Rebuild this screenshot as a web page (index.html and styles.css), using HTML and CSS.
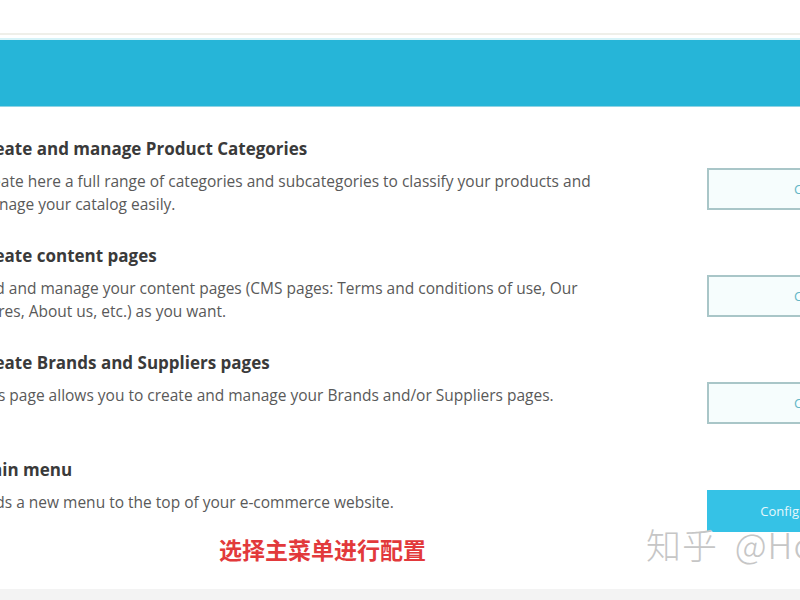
FILE: index.html
```html
<!DOCTYPE html>
<html lang="en">
<head>
    <meta charset="UTF-8">
    <meta name="viewport" content="width=device-width, initial-scale=1.0">
    <title>Store setup</title>
    <link rel="stylesheet" href="styles.css">
</head>
<body>
    <div class="topbar"></div>
    <div class="banner"></div>

    <div class="steps">
        <div class="step">
            <div class="step-text">
                <h3>Create and manage Product Categories</h3>
                <p>Create here a full range of categories and subcategories to classify your products and manage your catalog easily.</p>
            </div>
            <a class="btn btn-outline">Create</a>
        </div>

        <div class="step">
            <div class="step-text">
                <h3>Create content pages</h3>
                <p>Add and manage your content pages (CMS pages: Terms and conditions of use, Our stores, About us, etc.) as you want.</p>
            </div>
            <a class="btn btn-outline">Create</a>
        </div>

        <div class="step">
            <div class="step-text">
                <h3>Create Brands and Suppliers pages</h3>
                <p>This page allows you to create and manage your Brands and/or Suppliers pages.</p>
            </div>
            <a class="btn btn-outline">Create</a>
        </div>

        <div class="step">
            <div class="step-text">
                <h3>Main menu</h3>
                <p>Adds a new menu to the top of your e-commerce website.</p>
                <div class="note">选择主菜单进行配置</div>
            </div>
            <a class="btn btn-fill">Configure</a>
        </div>
    </div>

    <div class="footer-band"></div>

    <div class="watermark">知乎 @HomeShop</div>
</body>
</html>
```

FILE: styles.css
```css
html, body { overflow: hidden; }
body {
    margin: 0;
    width: 800px;
    height: 600px;
    position: relative;
    background: #fff;
    font-family: "Open Sans", "Noto Sans", sans-serif;
    color: #555;
}

.topbar { height: 33px; border-bottom: 2px solid #efefe9; }
.banner {
    margin-top: 3px;
    height: 66px;
    border-top: 2px solid #d6f3f8;
    border-bottom: 1px solid #8fd3e4;
    background: #26b5d8;
}

.steps { margin-left: -24px; padding: 31px 0 23px; }
.step {
    display: grid;
    grid-template-columns: 639px auto;
    column-gap: 92px;
    align-items: start;
    height: 107px;
}

.step-text h3 {
    margin: 0;
    font-size: 17px;
    line-height: 21px;
    font-weight: 700;
    color: #3a3a3a;
}
.step-text p {
    margin: 11px 0 0;
    font-size: 15.5px;
    line-height: 23px;
    color: #595959;
}

.note {
    margin: 20px 0 0 243px;
    font-family: "Noto Sans CJK SC", sans-serif;
    font-size: 23px;
    line-height: 30px;
    font-weight: 700;
    color: #e2393b;
}

.btn {
    display: block;
    box-sizing: border-box;
    height: 42px;
    margin-top: 30px;
    font-size: 13px;
    line-height: 38px;
    text-align: center;
    white-space: nowrap;
}
.btn-outline {
    width: 214px;
    border: 2px solid #a9c6c8;
    background: #f6fdfd;
    color: #63b6c6;
}
.btn-fill {
    width: 166px;
    margin-top: 31px;
    border: 2px solid #35c2e6;
    background: #35c2e6;
    color: #e6f8fc;
}

.footer-band { height: 12px; background: #f3f3f3; }

.watermark {
    position: absolute;
    left: 646px;
    top: 524px;
    font-family: "Noto Sans CJK SC", sans-serif;
    font-size: 35px;
    line-height: 40px;
    font-weight: 300;
    letter-spacing: 1px;
    word-spacing: 8px;
    color: #c6c6c6;
    white-space: nowrap;
    text-shadow: 1px 1px 0 rgba(255, 255, 255, 0.8);
}
```
